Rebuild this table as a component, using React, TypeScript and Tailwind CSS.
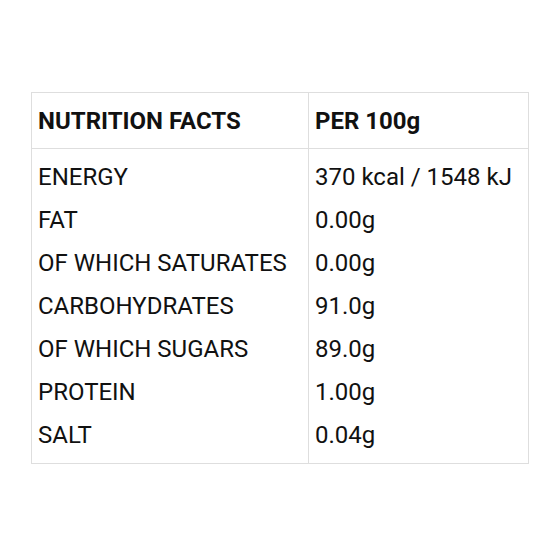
const ROWS: [string, string][] = [
  ['ENERGY', '370 kcal / 1548 kJ'],
  ['FAT', '0.00g'],
  ['OF WHICH SATURATES', '0.00g'],
  ['CARBOHYDRATES', '91.0g'],
  ['OF WHICH SUGARS', '89.0g'],
  ['PROTEIN', '1.00g'],
  ['SALT', '0.04g'],
];

export default function App() {
  return (
    <div className="w-[560px] h-[560px] bg-white pt-[92px] pl-[31px] font-['Roboto',sans-serif] text-[24px] text-[#111]">
      <div className="w-[498px] border border-[#dedede]">
        <div className="grid grid-cols-[277px_1fr] border-b border-[#dedede]">
          <div className="h-[55px] flex items-center pl-[6px] font-bold border-r border-[#dedede]">
            NUTRITION FACTS
          </div>
          <div className="h-[55px] flex items-center pl-[6px] font-bold">PER 100g</div>
        </div>
        <div className="grid grid-cols-[277px_1fr]">
          <div className="border-r border-[#dedede] pt-[6px] pb-[7px] pl-[6px]">
            {ROWS.map(([k]) => (
              <div key={k} className="h-[43px] flex items-center">
                {k}
              </div>
            ))}
          </div>
          <div className="pt-[6px] pb-[7px] pl-[6px]">
            {ROWS.map(([k, v]) => (
              <div key={k} className="h-[43px] flex items-center">
                {v}
              </div>
            ))}
          </div>
        </div>
      </div>
    </div>
  );
}
